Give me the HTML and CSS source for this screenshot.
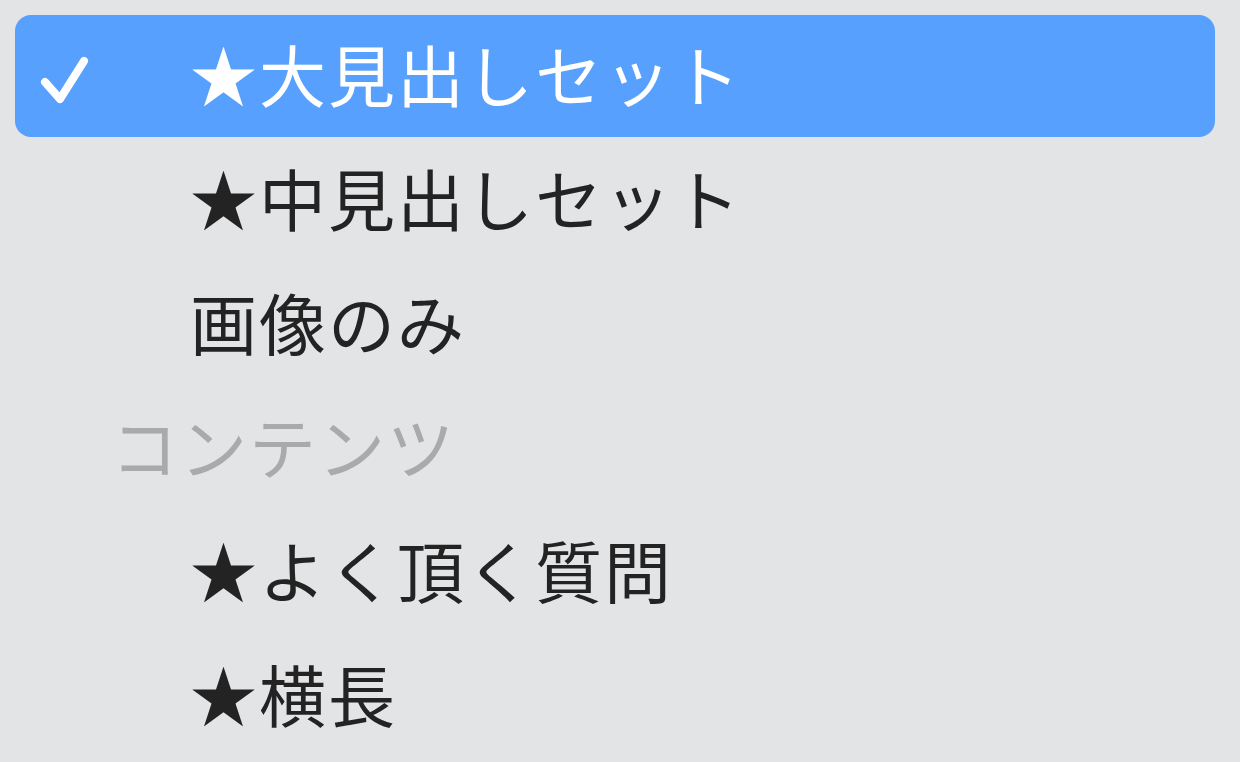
FILE: index.html
```html
<!DOCTYPE html>
<html lang="ja">
<head>
  <meta charset="UTF-8">
  <title>スタイル</title>
  <link rel="stylesheet" href="styles.css">
</head>
<body>
  <ul class="menu">
    <li class="item selected">
      <span class="check">
        <svg width="50" height="50" viewBox="0 0 50 50"><path d="M6 27 L21 44 L45 6" fill="none" stroke="#fff" stroke-width="8" stroke-linecap="round" stroke-linejoin="round"/></svg>
      </span>
      <span class="label">★大見出しセット</span>
    </li>
    <li class="item"><span class="check"></span><span class="label">★中見出しセット</span></li>
    <li class="item"><span class="check"></span><span class="label">画像のみ</span></li>
    <li class="item header"><span class="label">コンテンツ</span></li>
    <li class="item"><span class="check"></span><span class="label">★よく頂く質問</span></li>
    <li class="item"><span class="check"></span><span class="label">★横長</span></li>
  </ul>
</body>
</html>
```

FILE: styles.css
```css
* {
  margin: 0;
  padding: 0;
  box-sizing: border-box;
}

body {
  font-family: "Noto Sans CJK JP", "Noto Sans", sans-serif;
  background-color: #e3e4e6;
  color: #232323;
  height: 100vh;
  overflow: hidden;
}

.menu {
  list-style: none;
  padding: 14px 25px 0 15px;
}

.item {
  display: flex;
  align-items: center;
  height: 124px;
  font-size: 67px;
  line-height: 1;
  letter-spacing: 2px;
  border-radius: 16px;
}

.item.selected {
  background-color: #58a0fe;
  color: #fff;
  height: 122px;
  margin: 1px 0;
}

.check {
  width: 175px;
  flex: none;
  padding-left: 24px;
  display: flex;
  align-items: center;
}

.check svg {
  display: block;
  position: relative;
  top: 4px;
}

.item .label {
  position: relative;
  top: -4px;
  white-space: nowrap;
}

.header {
  color: #a9aaac;
  padding-left: 96px;
}
```
